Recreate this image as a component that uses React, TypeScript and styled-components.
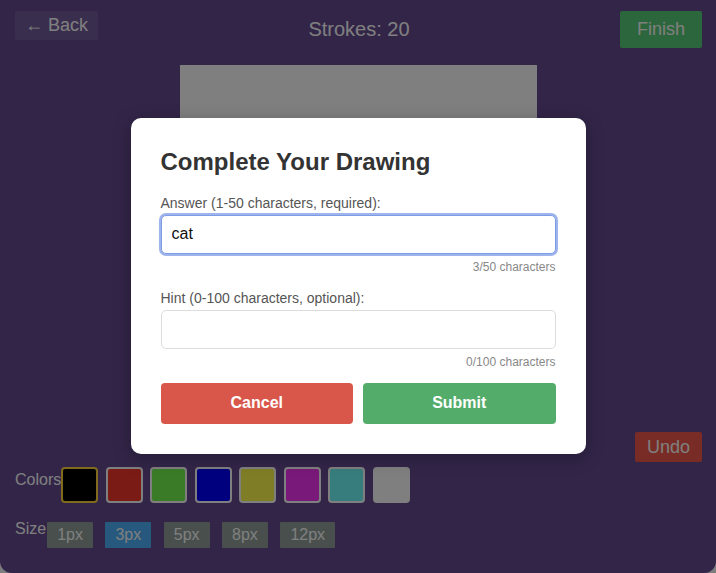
import React from "react";
import styled, { createGlobalStyle } from "styled-components";

const GlobalStyle = createGlobalStyle`
  html, body {
    margin: 0;
    padding: 0;
    background: #7d7d7d;
  }
  body {
    font-family: "Liberation Sans", Arial, Helvetica, sans-serif;
  }
  * { box-sizing: border-box; }
`;

const Screen = styled.div`
  position: relative;
  height: 573px;
  background: #654a91;
  border-radius: 0 0 12px 12px;
  overflow: hidden;
  padding: 11px 14px 0 15px;
`;

const Header = styled.header`
  display: flex;
  justify-content: space-between;
  align-items: flex-start;
`;

const FlatButton = styled.button<{ $bg: string; $size?: number; $pad?: string }>`
  border: none;
  border-radius: 2px;
  background: ${(p) => p.$bg};
  color: #ffffff;
  font-family: inherit;
  font-size: ${(p) => p.$size ?? 18}px;
  line-height: 1.15;
  padding: ${(p) => p.$pad ?? "4px 10px"};
  cursor: pointer;
`;

const StrokeCount = styled.div`
  margin-top: 7px;
  color: #ffffff;
  font-size: 20px;
  line-height: 23px;
`;

const CanvasWrap = styled.div`
  display: flex;
  justify-content: center;
  margin-top: 17px;
`;

const Canvas = styled.div`
  width: 357px;
  height: 357px;
  background: #ffffff;
`;

const UndoRow = styled.div`
  display: flex;
  justify-content: flex-end;
  margin-top: 10px;
`;

const ToolRow = styled.div<{ $top: number }>`
  display: flex;
  align-items: flex-start;
  margin-top: ${(p) => p.$top}px;
`;

const ToolLabel = styled.span<{ $offset: number }>`
  color: #ffffff;
  font-size: 16px;
  line-height: 18px;
  margin-top: ${(p) => p.$offset}px;
  margin-right: 1px;
`;

const Swatches = styled.div`
  display: flex;
  gap: 7.5px;
  margin-left: -1px;
`;

const Swatch = styled.div<{ $color: string; $active?: boolean }>`
  width: 37px;
  height: 36px;
  border-radius: 4px;
  background: ${(p) => p.$color};
  border: 2px solid ${(p) => (p.$active ? "#ffd43a" : "#ffffff")};
`;

const SizeButtons = styled.div`
  display: flex;
  gap: 12.5px;
  margin-top: 3px;
`;

const SizeButton = styled.button<{ $active?: boolean }>`
  border: none;
  border-radius: 1px;
  background: ${(p) => (p.$active ? "#4cb2fa" : "#909f9b")};
  color: #ffffff;
  font-family: inherit;
  font-size: 16px;
  line-height: 18px;
  padding: 4px 10px;
`;

const Overlay = styled.div`
  position: absolute;
  inset: 0;
  background: rgba(0, 0, 0, 0.5);
  display: flex;
  align-items: center;
  justify-content: center;
  padding-bottom: 2px;
`;

const Modal = styled.div`
  width: 455px;
  background: #ffffff;
  border-radius: 10px;
  padding: 30px;
  box-shadow: 0 4px 18px rgba(0, 0, 0, 0.25);
`;

const Title = styled.h2`
  margin: 0 0 19px;
  font-size: 24px;
  font-weight: 700;
  line-height: normal;
  color: #333333;
`;

const Field = styled.div`
  margin-bottom: 16px;
`;

const Label = styled.label`
  display: block;
  margin-bottom: 4px;
  font-size: 14px;
  line-height: 16px;
  color: #555555;
`;

const TextInput = styled.input<{ $focused?: boolean }>`
  display: block;
  width: 100%;
  height: 39px;
  padding: 0 10px;
  font-family: inherit;
  font-size: 16px;
  color: #111111;
  background: #ffffff;
  border: 1px solid ${(p) => (p.$focused ? "#7e9be6" : "#dddddd")};
  border-radius: 5px;
  outline: none;
  box-shadow: ${(p) => (p.$focused ? "0 0 0 2px rgba(126, 155, 230, 0.75)" : "none")};
`;

const Counter = styled.div`
  margin-top: 6px;
  text-align: right;
  font-size: 12px;
  line-height: 14px;
  color: #888888;
`;

const Actions = styled.div`
  display: flex;
  gap: 10px;
  margin-top: -2px;
`;

const ActionButton = styled.button<{ $bg: string }>`
  flex: 1;
  height: 41px;
  border: none;
  border-radius: 4px;
  background: ${(p) => p.$bg};
  color: #ffffff;
  font-family: inherit;
  font-size: 16px;
  font-weight: 700;
  cursor: pointer;
`;

const palette = [
  "#000000",
  "#f4392a",
  "#74f650",
  "#0000ff",
  "#fffa4a",
  "#f232f2",
  "#70fafa",
  "#ffffff",
];

const sizes = [1, 3, 5, 8, 12];

export default function App() {
  const answer = "cat";
  const hint = "";

  return (
    <>
      <GlobalStyle />
      <Screen>
        <Header>
          <FlatButton $bg="rgba(255,255,255,0.1)" $pad="4px 10px">
            ← Back
          </FlatButton>
          <StrokeCount>Strokes: 20</StrokeCount>
          <FlatButton $bg="#58cc78" $pad="8px 17px">
            Finish
          </FlatButton>
        </Header>

        <CanvasWrap>
          <Canvas />
        </CanvasWrap>

        <UndoRow>
          <FlatButton $bg="#f0584a" $pad="5px 12px">
            Undo
          </FlatButton>
        </UndoRow>

        <ToolRow $top={5}>
          <ToolLabel $offset={4}>Colors</ToolLabel>
          <Swatches>
            {palette.map((c, i) => (
              <Swatch key={c} $color={c} $active={i === 0} />
            ))}
          </Swatches>
        </ToolRow>

        <ToolRow $top={16}>
          <ToolLabel $offset={1}>Size</ToolLabel>
          <SizeButtons>
            {sizes.map((s) => (
              <SizeButton key={s} $active={s === 3}>
                {s}px
              </SizeButton>
            ))}
          </SizeButtons>
        </ToolRow>

        <Overlay>
          <Modal>
            <Title>Complete Your Drawing</Title>
            <Field>
              <Label>Answer (1-50 characters, required):</Label>
              <TextInput $focused value={answer} readOnly />
              <Counter>{answer.length}/50 characters</Counter>
            </Field>
            <Field>
              <Label>Hint (0-100 characters, optional):</Label>
              <TextInput value={hint} readOnly />
              <Counter>{hint.length}/100 characters</Counter>
            </Field>
            <Actions>
              <ActionButton $bg="#d9574a">Cancel</ActionButton>
              <ActionButton $bg="#53ac6a">Submit</ActionButton>
            </Actions>
          </Modal>
        </Overlay>
      </Screen>
    </>
  );
}
